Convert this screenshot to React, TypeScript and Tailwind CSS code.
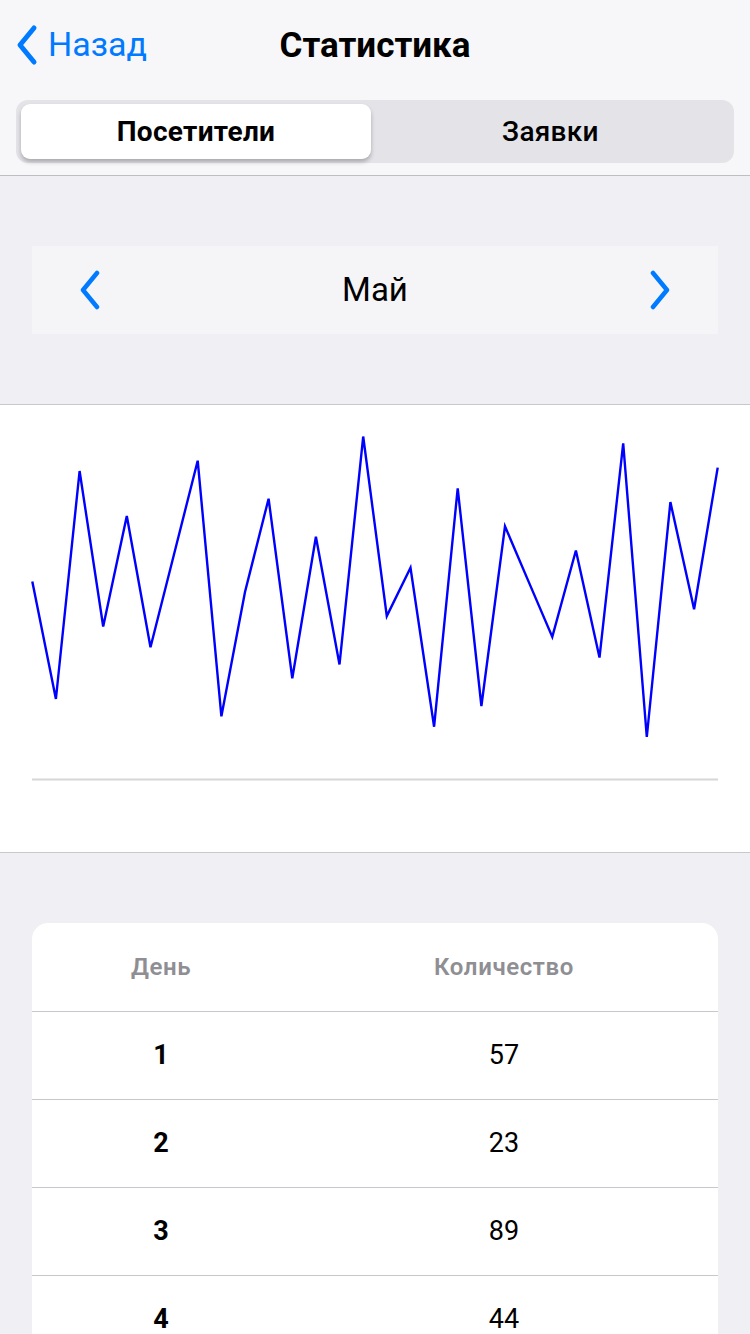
import React from "react";

const visits = [
  57, 23, 89, 44, 76, 38, 65, 92, 18, 54, 81, 29, 70, 33, 99, 47, 61, 15, 84, 21,
  73, 57, 41, 66, 35, 97, 12, 80, 49, 90,
];

const font = { fontFamily: "Roboto, 'Liberation Sans', sans-serif" };

function Chevron({ dir, className }: { dir: "left" | "right"; className?: string }) {
  return (
    <svg width="24" height="40" viewBox="0 0 24 40" className={className}>
      <path
        d={dir === "left" ? "M19 3 L5 20 L19 37" : "M5 3 L19 20 L5 37"}
        fill="none"
        stroke="#007aff"
        strokeWidth="4.5"
        strokeLinecap="round"
        strokeLinejoin="round"
      />
    </svg>
  );
}

function Chart() {
  const step = (717.7 - 32.3) / (visits.length - 1);
  const pts = visits
    .map((v, i) => `${(32.3 + i * step).toFixed(1)},${(373.5 - v * 3.4545).toFixed(1)}`)
    .join(" ");
  return (
    <svg width="750" height="447" viewBox="0 0 750 447" className="block">
      <polyline points={pts} fill="none" stroke="#0000ff" strokeWidth="2.4" strokeLinejoin="miter" />
      <line x1="32" y1="374.5" x2="718" y2="374.5" stroke="#d6d6d6" strokeWidth="2" />
    </svg>
  );
}

export default function App() {
  const rows = visits.slice(0, 6);
  return (
    <div className="w-[750px] h-[1334px] overflow-hidden bg-[#efeff4]" style={font}>
      {/* Nav bar */}
      <div className="bg-[#f7f7f9] border-b border-[#bdbdc2]">
        <div className="relative h-[92px] flex items-center justify-center">
          <button className="absolute left-[14px] top-[24px] flex items-center gap-[8px] text-[#007aff]">
            <svg width="26" height="42" viewBox="0 0 26 42">
              <path d="M20 4 L6 21 L20 38" fill="none" stroke="#007aff" strokeWidth="5" strokeLinecap="round" strokeLinejoin="round" />
            </svg>
            <span className="text-[34px] leading-none -mt-[2px]">Назад</span>
          </button>
          <h1 className="text-[35px] font-bold text-black leading-none -mt-[2px]">Статистика</h1>
        </div>
        <div className="px-[16px] pt-[8px] pb-[12px]">
          <div className="h-[63px] rounded-[12px] bg-[#e3e3e8] p-[4px] flex">
            <div className="w-[350px] ml-[1px] rounded-[9px] bg-white shadow-[0_3px_4px_rgba(0,0,0,0.25)] flex items-center justify-center text-[28px] font-bold tracking-[0.3px] text-black">
              Посетители
            </div>
            <div className="flex-1 flex items-center justify-center text-[28px] font-medium tracking-[0.3px] text-black">
              Заявки
            </div>
          </div>
        </div>
      </div>

      {/* Month selector */}
      <div className="px-[32px] pt-[70px] pb-[70px] border-b border-[#c8c8cc]">
        <div className="h-[88px] bg-[#f5f5f8] flex items-center justify-between px-[46px]">
          <Chevron dir="left" />
          <span className="text-[33px] text-black">Май</span>
          <Chevron dir="right" />
        </div>
      </div>

      {/* Chart */}
      <div className="bg-white border-b border-[#c8c8cc]">
        <Chart />
      </div>

      {/* Table */}
      <div className="px-[32px] pt-[70px]">
        <div className="bg-white rounded-t-[16px]">
          <div className="h-[88px] flex items-center text-[24px] font-semibold tracking-[0.6px] text-[#8e8e93]">
            <div className="w-[258px] text-center">День</div>
            <div className="flex-1 text-center">Количество</div>
          </div>
          {rows.map((v, i) => (
            <div key={i} className="h-[88px] flex items-center border-t border-[#c8c8cc] text-[27px] text-black">
              <div className="w-[258px] text-center font-bold">{i + 1}</div>
              <div className="flex-1 text-center">{v}</div>
            </div>
          ))}
        </div>
      </div>
    </div>
  );
}
